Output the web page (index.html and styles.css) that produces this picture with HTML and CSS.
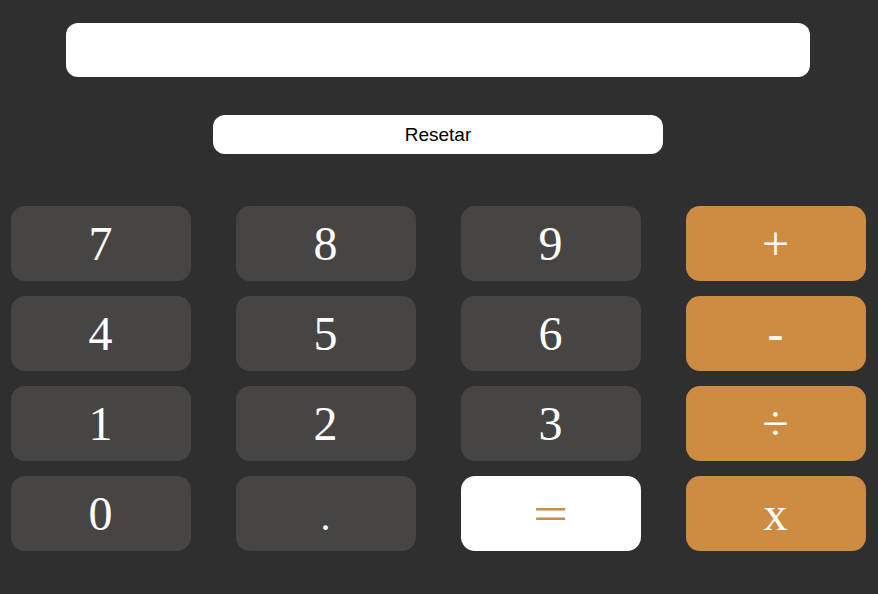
FILE: index.html
```html
<!DOCTYPE html>
<html lang="pt">
<head>
<meta charset="utf-8">
<title>Calculadora</title>
<link rel="stylesheet" href="styles.css">
</head>
<body>
<main class="calc">
  <div class="display"></div>
  <button class="reset">Resetar</button>
  <div class="keys">
    <button class="key num">7</button>
    <button class="key num">8</button>
    <button class="key num">9</button>
    <button class="key op">+</button>
    <button class="key num">4</button>
    <button class="key num">5</button>
    <button class="key num">6</button>
    <button class="key op">-</button>
    <button class="key num">1</button>
    <button class="key num">2</button>
    <button class="key num">3</button>
    <button class="key op">÷</button>
    <button class="key num">0</button>
    <button class="key num dot">.</button>
    <button class="key eq"><span class="eq-glyph">=</span></button>
    <button class="key op">x</button>
  </div>
</main>
</body>
</html>
```
FILE: styles.css
```css
html, body {
  margin: 0;
  padding: 0;
  background: #2f2f2f;
  height: 100%;
}
.calc {
  display: flex;
  flex-direction: column;
  align-items: center;
  padding-top: 23px;
  padding-right: 2px;
}
.display {
  width: 744px;
  height: 54px;
  background: #ffffff;
  border-radius: 12px;
}
.reset {
  margin-top: 38px;
  width: 450px;
  height: 39px;
  border: none;
  border-radius: 12px;
  background: #ffffff;
  color: #000000;
  font-family: "Liberation Sans", Arial, sans-serif;
  font-size: 19px;
  padding: 0;
}
.keys {
  margin-top: 52px;
  display: grid;
  grid-template-columns: repeat(4, 180px);
  grid-auto-rows: 75px;
  column-gap: 45px;
  row-gap: 15px;
}
.key {
  border: none;
  border-radius: 14px;
  padding: 0;
  font-family: "Liberation Serif", "Times New Roman", serif;
  font-size: 48px;
  color: #ffffff;
  line-height: 1;
}
.num {
  background: #464543;
}
.dot {
  font-size: 40px;
  padding-top: 6px;
}
.op {
  background: #cd8c41;
}
.eq {
  background: #ffffff;
  color: #cd8c41;
}
.eq-glyph {
  display: inline-block;
  transform: scaleX(1.3);
}
```
